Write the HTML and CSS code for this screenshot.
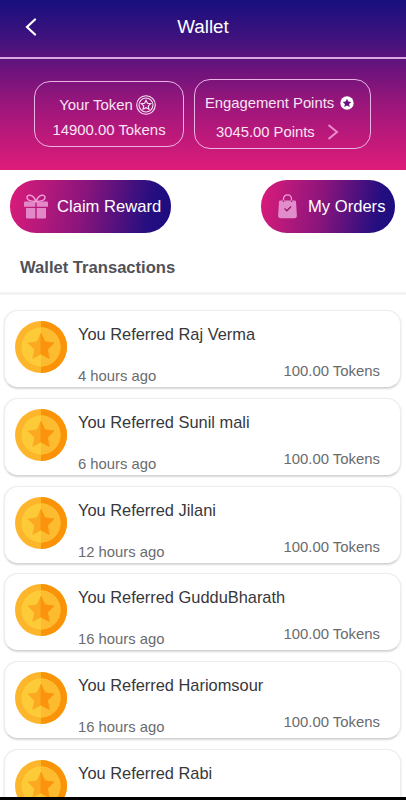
FILE: index.html
```html
<!DOCTYPE html>
<html lang="en">
<head>
<meta charset="utf-8">
<title>Wallet</title>
<link rel="stylesheet" href="styles.css">
</head>
<body>
<svg width="0" height="0" class="defs">
  <symbol id="coin" viewBox="0 0 52 52">
    <circle cx="26" cy="26" r="26" fill="#fdb62b"/>
    <path d="M26 0a26 26 0 0 1 0 52z" fill="#fb9309"/>
    <circle cx="26" cy="26" r="19.5" fill="#fdcb38"/>
    <path d="M26 6.500a19.500 19.500 0 0 1 0 39z" fill="#fdbb30"/>
    <path d="M26 12.500l-4 8.300-9 1.200 6.500 6.400-1.700 9 8.200-4.400z" fill="#fca922" stroke="#fca922" stroke-width=".8" stroke-linejoin="round"/>
    <path d="M26 12.500l4 8.300 9 1.200-6.500 6.400 1.700 9-8.200-4.400z" fill="#fb930c" stroke="#fb930c" stroke-width=".8" stroke-linejoin="round"/>
  </symbol>
</svg>
<div class="screen">
  <header class="top">
    <div class="bar">
      <svg class="back" width="12" height="18" viewBox="0 0 12 18"><path d="M10 1.500L2 9l8 7.500"/></svg>
      <h1>Wallet</h1>
    </div>
    <div class="balances">
      <div class="box tokens">
        <div class="line first">Your Token
          <svg width="20" height="20" viewBox="0 0 20 20" fill="none" stroke="#f7e4f5"><circle cx="10" cy="10" r="9.300" stroke-width="1.100"/><circle cx="10" cy="10" r="7" stroke-width="1.100"/><path d="M10 5.300l1.400 3 3.300.4-2.400 2.200.6 3.300-2.900-1.600-2.900 1.600.6-3.300-2.400-2.200 3.300-.4z" stroke-width="1.200"/></svg>
        </div>
        <div class="line">14900.00 Tokens</div>
      </div>
      <div class="box points">
        <div class="line first">Engagement Points
          <svg width="14" height="14" viewBox="0 0 14 14"><circle cx="7" cy="7" r="6.700" fill="#fff"/><path d="M7 2.800l1.300 2.700 3 .4-2.200 2 .6 3L7 9.500l-2.700 1.400.6-3-2.200-2 3-.4z" fill="#65137c"/></svg>
        </div>
        <div class="line second">3045.00 Points
          <svg width="12" height="16" viewBox="0 0 12 16"><path d="M1.500 1l8.500 7-8.500 7" fill="none" stroke="#ee8bcb" stroke-width="2"/></svg>
        </div>
      </div>
    </div>
  </header>
  <div class="actions">
    <div class="pill claim">
      <svg width="24" height="25" viewBox="0 0 24 25"><g fill="#e288c8"><path d="M1 7.500h10.300v5.200H0V8.500a1 1 0 0 1 1-1zM12.700 7.500H23a1 1 0 0 1 1 1v4.200H12.700zM2 14h9.300v10.500H3a1 1 0 0 1-1-1zM12.700 14H22v9.500a1 1 0 0 1-1 1h-8.300z"/></g><path d="M12 7.500C9-.5 2.500 0 3 4c.3 2.600 4 3.300 9 3.500 5-.2 8.700-.9 9-3.500.5-4-6-4.500-9 3.500z" fill="none" stroke="#f09bd2" stroke-width="1.500"/></svg>
      <span>Claim Reward</span>
    </div>
    <div class="pill orders">
      <svg width="19" height="25" viewBox="0 0 19 25"><path d="M2.500 6.500h14a1.500 1.500 0 0 1 1.500 1.400l.9 13.600a2.500 2.500 0 0 1-2.500 2.700H2.600A2.500 2.500 0 0 1 .1 21.500L1 7.900a1.500 1.500 0 0 1 1.500-1.400z" fill="#e28dcb"/><path d="M5.500 8V4.800a4 4 0 0 1 8 0V8" fill="none" stroke="#eda0d6" stroke-width="1.300"/><path d="M5.500 8V6.500M13.500 8V6.500M6.500 14.500l2.400 2.300 4.200-4.300" fill="none" stroke="#9b176f" stroke-width="1.300"/></svg>
      <span>My Orders</span>
    </div>
  </div>
  <h2>Wallet Transactions</h2>
  <main class="list">
    <article class="card"><svg class="coin"><use href="#coin"/></svg><div class="info"><h3>You Referred Raj Verma</h3><p>4 hours ago</p></div><div class="amount">100.00 Tokens</div></article>
    <article class="card"><svg class="coin"><use href="#coin"/></svg><div class="info"><h3>You Referred Sunil mali</h3><p>6 hours ago</p></div><div class="amount">100.00 Tokens</div></article>
    <article class="card"><svg class="coin"><use href="#coin"/></svg><div class="info"><h3>You Referred Jilani</h3><p>12 hours ago</p></div><div class="amount">100.00 Tokens</div></article>
    <article class="card"><svg class="coin"><use href="#coin"/></svg><div class="info"><h3>You Referred GudduBharath</h3><p>16 hours ago</p></div><div class="amount">100.00 Tokens</div></article>
    <article class="card"><svg class="coin"><use href="#coin"/></svg><div class="info"><h3>You Referred Hariomsour</h3><p>16 hours ago</p></div><div class="amount">100.00 Tokens</div></article>
    <article class="card"><svg class="coin"><use href="#coin"/></svg><div class="info"><h3>You Referred Rabi</h3></div></article>
  </main>
  <div class="navline"></div>
</div>
</body>
</html>
```
FILE: styles.css
```css
* { box-sizing: border-box; margin: 0; padding: 0; }
body { font-family: "Liberation Sans", Arial, sans-serif; background: #fff; overflow: hidden; }
.defs { display: block; }
.screen { width: 406px; height: 800px; display: flex; flex-direction: column; overflow: hidden; }
.screen svg { flex: none; }
.top { height: 170px; flex: none; background: linear-gradient(#17107e 0%, #3f127e 22%, #65137c 38%, #9c167b 62%, #df1c79 100%); }
.bar { height: 59px; border-bottom: 2px solid #dba9e2; display: grid; grid-template-columns: 60px 1fr 60px; align-items: center; padding-bottom: 4px; }
.back { margin-left: 25px; fill: none; stroke: #fff; stroke-width: 2.2; stroke-linecap: round; }
h1 { font-size: 18.8px; font-weight: 400; line-height: 22px; color: #fff; text-align: center; white-space: nowrap; }
.balances { display: flex; padding: 20px 0 0 34px; gap: 10px; }
.box { border: 1px solid #e9b4e4; border-radius: 16px; color: #f9e4f5; font-size: 14.8px; white-space: nowrap; }
.tokens { width: 150px; height: 66px; margin-top: 2px; padding-top: 11px; }
.points { width: 177px; height: 70px; padding: 13px 0 0 10px; }
.line { display: flex; align-items: center; line-height: 20px; height: 20px; }
.tokens .line { justify-content: center; margin-top: 5px; font-size: 14.9px; }
.tokens .first { gap: 3px; margin-top: 2px; padding-right: 3px; }
.points .first { gap: 6px; }
.points .second { margin: 9px 0 0 11px; gap: 12px; }
.actions { display: flex; justify-content: space-between; height: 63px; flex: none; padding: 10px 11px 0 10px; }
.pill { height: 53px; border-radius: 26px; display: flex; align-items: center; color: #fff; font-size: 16.6px; white-space: nowrap; background: linear-gradient(100deg, #dc1c7a 0%, #8b157c 45%, #240e80 86%, #1c0d80 100%); }
.claim { width: 161px; padding-left: 14px; gap: 9px; }
.orders { width: 134px; padding-left: 17px; gap: 11px; }
h2 { height: 62px; flex: none; font-size: 16.6px; line-height: 69px; color: #505157; padding-left: 20px; border-bottom: 3px solid #f3f3f4; white-space: nowrap; }
.list { padding: 15px 5px 0 4px; display: flex; flex-direction: column; gap: 9.75px; height: 502px; flex: none; overflow: hidden; }
.card { height: 78px; flex: none; display: flex; border-radius: 14px; padding: 11px 20px 0 11px; background: #fff; border: 1px solid #ededed; border-bottom-color: #d5d5d5; box-shadow: 0 1px 2px rgba(0,0,0,.16); }
.card .coin { width: 52px; height: 52px; margin-left: -1px; margin-top: -1px; }
.info { margin-left: 11px; flex: 1; min-width: 0; white-space: nowrap; }
h3 { font-size: 16.4px; font-weight: 400; line-height: 24px; color: #37373c; }
.info p { font-size: 14.8px; line-height: 20px; color: #6a6b6f; margin-top: 20px; }
.amount { margin-top: 39px; font-size: 14.9px; line-height: 20px; color: #6a6b6f; white-space: nowrap; }
.navline { height: 3px; flex: none; background: #000; }
```
